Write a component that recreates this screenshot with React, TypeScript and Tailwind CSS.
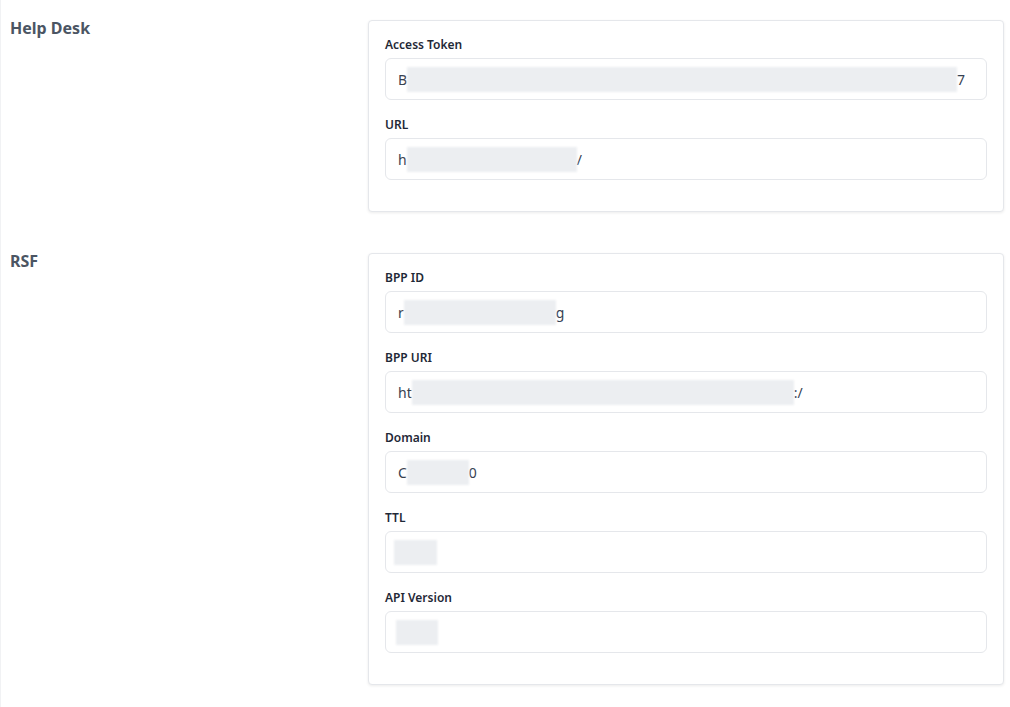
import React from "react"

type Field = {
  label: string
  head?: string
  blur: number
  tail?: string
  blurOffset?: number
}

const sections: { title: string; fields: Field[] }[] = [
  {
    title: "Help Desk",
    fields: [
      { label: "Access Token", head: "B", blur: 550, tail: "7" },
      { label: "URL", head: "h", blur: 170, tail: "/" },
    ],
  },
  {
    title: "RSF",
    fields: [
      { label: "BPP ID", head: "r", blur: 152, tail: "g" },
      { label: "BPP URI", head: "ht", blur: 382, tail: ":/" },
      { label: "Domain", head: "C", blur: 62, tail: "0" },
      { label: "TTL", blur: 43, blurOffset: -4 },
      { label: "API Version", blur: 42, blurOffset: -2 },
    ],
  },
]

function BlurredValue({ field }: { field: Field }) {
  return (
    <div className="flex items-center text-[14px] text-[#374151]">
      {field.head && <span>{field.head}</span>}
      <span
        className="inline-block h-[25px] bg-[#eceef1] blur-[1px]"
        style={{ width: field.blur, marginLeft: field.blurOffset ?? 0 }}
      />
      {field.tail && <span>{field.tail}</span>}
    </div>
  )
}

function FieldRow({ field }: { field: Field }) {
  return (
    <div className="mb-[17px]">
      <label className="block h-4 mb-[5px] text-[12px] leading-4 font-semibold text-[#1f2937]">
        {field.label}
      </label>
      <div className="h-[42px] flex items-center px-[12px] border border-[#e5e7eb] rounded-md bg-white">
        <BlurredValue field={field} />
      </div>
    </div>
  )
}

export default function App() {
  return (
    <div
      className="min-h-screen bg-white border-l border-[#f1f2f4] pl-[9px] pr-[6px] pt-5"
      style={{ fontFamily: '"Noto Sans", "Open Sans", sans-serif' }}
    >
      {sections.map((section) => (
        <div key={section.title} className="flex mb-[41px]">
          <div className="w-[358px] shrink-0">
            <h2 className="text-[16px] leading-4 font-bold text-[#4b5563]">{section.title}</h2>
          </div>
          <div className="flex-1 bg-white border border-[#e5e7eb] rounded shadow-[0_1px_3px_rgba(0,0,0,0.08)] px-4 pt-4 pb-[14px]">
            {section.fields.map((field) => (
              <FieldRow key={field.label} field={field} />
            ))}
          </div>
        </div>
      ))}
    </div>
  )
}
